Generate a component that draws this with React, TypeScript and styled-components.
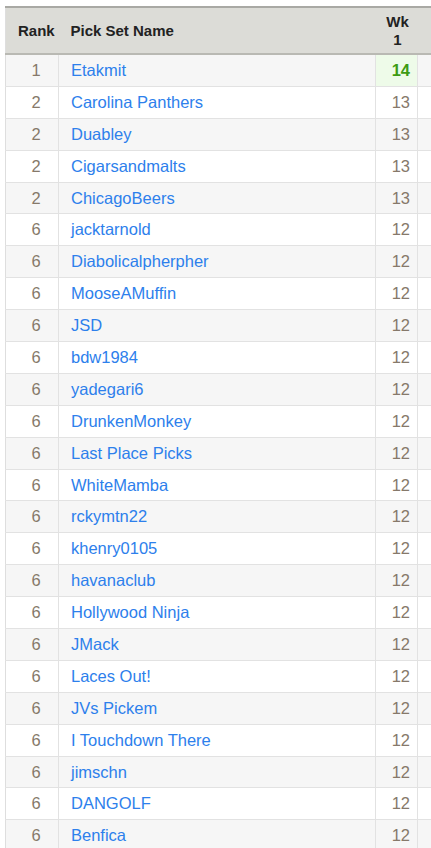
import styled, { createGlobalStyle } from 'styled-components';

const GlobalStyle = createGlobalStyle`
  html, body {
    margin: 0;
    padding: 0;
    background: #ffffff;
    overflow: hidden;
  }
  body {
    font-family: Arial, "Liberation Sans", sans-serif;
  }
`;

const Page = styled.div`
  width: 431px;
  height: 848px;
  overflow: hidden;
  padding: 6px 0 0 5px;
  box-sizing: border-box;
`;

const Table = styled.table`
  border-collapse: collapse;
  width: 480px;
  table-layout: fixed;
  font-size: 16.5px;
  border-left: 1px solid #dedede;
`;

const HeadRow = styled.tr`
  background: #dcdcd7;
  border-top: 2px solid #a9a9a4;
  border-bottom: 2px solid #b9b9b3;
`;

const HeadCell = styled.th<{ $align?: string; $pad?: string }>`
  height: 45px;
  padding: ${(p) => p.$pad ?? '0 0 0 12px'};
  font-weight: bold;
  font-size: 15px;
  color: #222222;
  text-align: ${(p) => p.$align ?? 'left'};
  line-height: 18px;
`;

const Row = styled.tr<{ $odd: boolean }>`
  background: ${(p) => (p.$odd ? '#f6f6f6' : '#ffffff')};
  border-bottom: 1px solid #e2e2e2;
`;

const RankCell = styled.td`
  height: 30.9px;
  padding: 0 0 0 8px;
  text-align: center;
  color: #86796a;
  border-right: 1px solid #e2e2e2;
`;

const NameCell = styled.td`
  padding: 0 0 0 12px;
  border-right: 1px solid #e2e2e2;
  white-space: nowrap;
`;

const NameLink = styled.a`
  color: #2d80ec;
  text-decoration: none;
`;

const ScoreCell = styled.td<{ $best?: boolean }>`
  padding: 0 7px 0 0;
  text-align: right;
  color: ${(p) => (p.$best ? '#3d9b14' : '#86796a')};
  font-weight: ${(p) => (p.$best ? 'bold' : 'normal')};
  background: ${(p) => (p.$best ? '#eefbe9' : 'transparent')};
  border-right: 1px solid #e2e2e2;
`;

const EmptyCell = styled.td``;

const rows: [number, string, number][] = [
  [1, 'Etakmit', 14],
  [2, 'Carolina Panthers', 13],
  [2, 'Duabley', 13],
  [2, 'Cigarsandmalts', 13],
  [2, 'ChicagoBeers', 13],
  [6, 'jacktarnold', 12],
  [6, 'Diabolicalpherpher', 12],
  [6, 'MooseAMuffin', 12],
  [6, 'JSD', 12],
  [6, 'bdw1984', 12],
  [6, 'yadegari6', 12],
  [6, 'DrunkenMonkey', 12],
  [6, 'Last Place Picks', 12],
  [6, 'WhiteMamba', 12],
  [6, 'rckymtn22', 12],
  [6, 'khenry0105', 12],
  [6, 'havanaclub', 12],
  [6, 'Hollywood Ninja', 12],
  [6, 'JMack', 12],
  [6, 'Laces Out!', 12],
  [6, 'JVs Pickem', 12],
  [6, 'I Touchdown There', 12],
  [6, 'jimschn', 12],
  [6, 'DANGOLF', 12],
  [6, 'Benfica', 12],
];

export default function App() {
  return (
    <Page>
      <GlobalStyle />
      <Table>
        <colgroup>
          <col style={{ width: 53 }} />
          <col style={{ width: 317 }} />
          <col style={{ width: 42 }} />
          <col style={{ width: 68 }} />
        </colgroup>
        <thead>
          <HeadRow>
            <HeadCell>Rank</HeadCell>
            <HeadCell>Pick Set Name</HeadCell>
            <HeadCell $align="center" $pad="0 0 0 2px">
              Wk
              <br />1
            </HeadCell>
            <HeadCell />
          </HeadRow>
        </thead>
        <tbody>
          {rows.map(([rank, name, score], i) => (
            <Row key={name} $odd={i % 2 === 0}>
              <RankCell>{rank}</RankCell>
              <NameCell>
                <NameLink href="#">{name}</NameLink>
              </NameCell>
              <ScoreCell $best={i === 0}>{score}</ScoreCell>
              <EmptyCell />
            </Row>
          ))}
        </tbody>
      </Table>
    </Page>
  );
}
